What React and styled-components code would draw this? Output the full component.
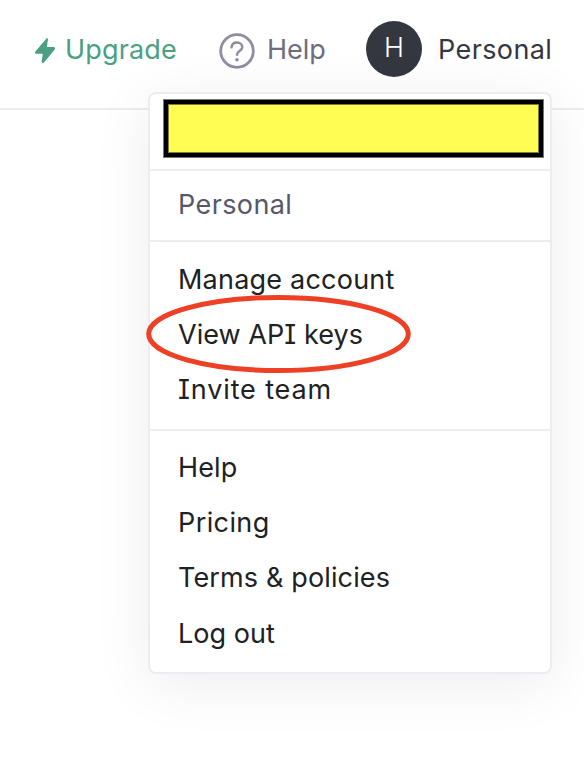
import React from "react";
import styled, { createGlobalStyle } from "styled-components";

const Global = createGlobalStyle`
  *, *::before, *::after { box-sizing: border-box; }
  body { margin: 0; background: #fff; font-family: Inter, "Liberation Sans", sans-serif; font-feature-settings: "cv08"; }
`;

const Page = styled.div`
  position: relative;
  width: 584px;
  height: 778px;
  overflow: hidden;
  background: #fff;
`;

const Header = styled.header`
  display: flex;
  align-items: center;
  height: 110px;
  padding: 0 0 10px 34px;
  border-bottom: 2px solid #ececf1;
`;

const Label = styled.span`
  font-size: 27px;
  line-height: 36px;
  white-space: nowrap;
  color: ${(p) => p.$color};
  letter-spacing: ${(p) => p.$spacing || 0}px;
`;

const NavItem = styled.a`
  display: flex;
  align-items: center;
  gap: ${(p) => p.$gap}px;
  width: ${(p) => p.$width}px;
  flex: none;
  ${Label} { margin-top: 2px; }
`;

const Avatar = styled.span`
  display: flex;
  align-items: center;
  justify-content: center;
  width: 56px;
  height: 56px;
  padding-bottom: 3px;
  border-radius: 50%;
  background: #353740;
  color: #fff;
  font-size: 27px;
  font-weight: 300;
`;

const Menu = styled.div`
  position: absolute;
  left: 148px;
  top: 92px;
  width: 404px;
  height: 582px;
  border: 2px solid #ececf1;
  border-radius: 8px;
  background: #fff;
  box-shadow: 0 10px 60px rgba(0, 0, 0, 0.075);
`;

const Section = styled.div`
  display: flex;
  flex-direction: column;
  height: ${(p) => p.$height}px;
  padding: ${(p) => p.$top}px 0 0 28px;
  & + & { border-top: 2px solid #ececf1; }
`;

const MenuItem = styled(Label).attrs({ as: "a" })`
  flex: none;
  height: ${(p) => p.$row || 55}px;
`;

const Redaction = styled.div`
  width: 381px;
  height: 59px;
  margin-left: -15px;
  border: 1px solid #777;
  background: #fffc54;
  box-shadow: inset 0 0 0 4px #000, inset 0 0 0 5px #807e2a;
`;

const Highlight = styled.svg`
  position: absolute;
  left: 144px;
  top: 292px;
`;

const BoltIcon = styled.svg`
  margin-top: 3px;
  flex: none;
`;

const QuestionIcon = styled.svg`
  margin-top: 4px;
  flex: none;
`;

const Bolt = () => (
  <BoltIcon width="22" height="28" viewBox="0 0 22 28">
    <path
      d="M12.400 1.400 1.200 14.700Q.4 16.600 2 16.800H8.800L7.600 24.800Q8.200 27 10 25.600L20.900 12.300Q21.600 10.300 19.900 10.100H12.800L14 2.400Q13.600.4 12.400 1.400Z"
      fill="#4aa181"
    />
  </BoltIcon>
);

const Question = () => (
  <QuestionIcon width="38" height="38" viewBox="0 0 38 38" fill="none" stroke="#8e8ea0" strokeLinecap="round">
    <circle cx="19" cy="19" r="16.300" strokeWidth="2.800" />
    <path d="M13.500 15.300C13.900 12.200 16 10.600 18.900 10.600C22 10.600 24.300 12.500 24.300 15.200C24.300 18.700 19 18.700 19 22.800" strokeWidth="2.500" />
    <circle cx="19" cy="27.700" r="1.800" fill="#8e8ea0" stroke="none" />
  </QuestionIcon>
);

export default function App() {
  return (
    <Page>
      <Global />
      <Header>
        <NavItem $gap={9} $width={184}>
          <Bolt />
          <Label $color="#4aa181" $spacing={0.15}>Upgrade</Label>
        </NavItem>
        <NavItem $gap={11} $width={148}>
          <Question />
          <Label $color="#6e6e80">Help</Label>
        </NavItem>
        <NavItem $gap={16} $width={200}>
          <Avatar>H</Avatar>
          <Label $color="#353740" $spacing={0.4}>Personal</Label>
        </NavItem>
      </Header>
      <Menu>
        <Section $height={75} $top={5}>
          <Redaction />
        </Section>
        <Section $height={71} $top={16}>
          <MenuItem $color="#565869" $spacing={0.4}>Personal</MenuItem>
        </Section>
        <Section $height={189} $top={20}>
          <MenuItem $color="#202123" $spacing={0.22}>Manage account</MenuItem>
          <MenuItem $color="#202123" $spacing={0.05}>View API keys</MenuItem>
          <MenuItem $color="#202123" $spacing={0.87}>Invite team</MenuItem>
        </Section>
        <Section $height={243} $top={19}>
          <MenuItem $color="#202123" $spacing={0.1}>Help</MenuItem>
          <MenuItem $color="#202123" $spacing={0.4}>Pricing</MenuItem>
          <MenuItem $color="#202123" $row={56} $spacing={0.14}>Terms &amp; policies</MenuItem>
          <MenuItem $color="#202123" $spacing={0.05}>Log out</MenuItem>
        </Section>
      </Menu>
      <Highlight width="270" height="84" fill="none" stroke="#ed4024" strokeWidth="5">
        <ellipse cx="134.500" cy="42" rx="129.800" ry="36.500" />
      </Highlight>
    </Page>
  );
}
